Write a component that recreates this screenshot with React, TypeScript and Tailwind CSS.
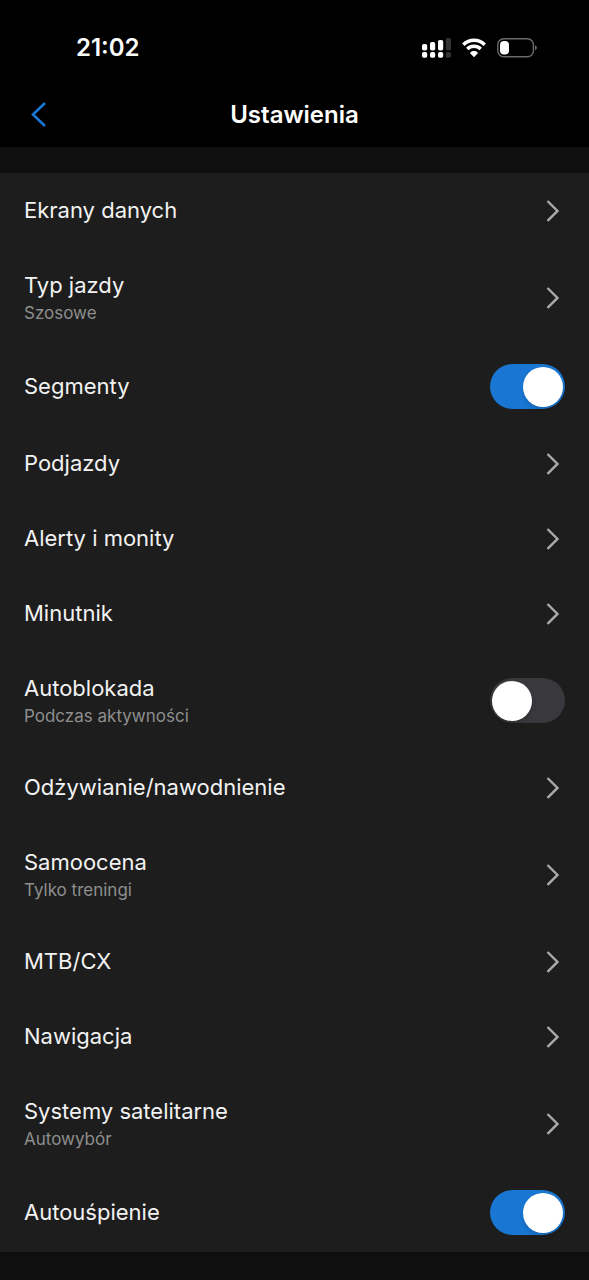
import React, { useState } from "react";

interface Setting {
  id: string;
  title: string;
  subtitle?: string;
  toggle?: boolean;
}

const SETTINGS: Setting[] = [
  { id: "screens", title: "Ekrany danych" },
  { id: "ride-type", title: "Typ jazdy", subtitle: "Szosowe" },
  { id: "segments", title: "Segmenty", toggle: true },
  { id: "climbs", title: "Podjazdy" },
  { id: "alerts", title: "Alerty i monity" },
  { id: "timer", title: "Minutnik" },
  {
    id: "auto-lock",
    title: "Autoblokada",
    subtitle: "Podczas aktywności",
    toggle: false,
  },
  { id: "nutrition", title: "Odżywianie/nawodnienie" },
  { id: "self-eval", title: "Samoocena", subtitle: "Tylko treningi" },
  { id: "mtb", title: "MTB/CX" },
  { id: "navigation", title: "Nawigacja" },
  { id: "satellites", title: "Systemy satelitarne", subtitle: "Autowybór" },
  { id: "auto-sleep", title: "Autouśpienie", toggle: true },
];

const SignalIcon: React.FC = () => (
  <svg width="30" height="22" viewBox="0 0 30 22" fill="#fff" aria-hidden="true">
    <rect x="1" y="7" width="5.2" height="6.5" rx="1.8" />
    <rect x="9" y="5" width="5.2" height="8.5" rx="1.8" />
    <rect x="17" y="3" width="5.2" height="10.5" rx="1.8" />
    <rect x="24.8" y="1" width="5.2" height="12.5" rx="1.8" fill="#333" />
    <rect x="1" y="15" width="5.2" height="5.8" rx="1.8" />
    <rect x="9" y="15" width="5.2" height="5.8" rx="1.8" />
    <rect x="17" y="15" width="5.2" height="5.8" rx="1.8" />
    <rect x="24.8" y="15" width="5.2" height="5.8" rx="1.8" fill="#333" />
  </svg>
);

const WifiIcon: React.FC = () => (
  <svg width="24" height="20" viewBox="0 0 24 20" fill="none" aria-hidden="true">
    <path
      d="M1.300 6.700a15.200 15.200 0 0 1 21.400 0M5.300 11.100a9.500 9.500 0 0 1 13.400 0"
      stroke="#fff"
      strokeWidth="3.500"
    />
    <path
      d="M12 19.200 8.400 15.500a.8.8 0 0 1 0-1.100c2-1.900 5.200-1.900 7.200 0a.8.8 0 0 1 0 1.100Z"
      fill="#fff"
    />
  </svg>
);

const BatteryIcon: React.FC = () => (
  <svg width="41" height="20" viewBox="0 0 41 20" fill="none" aria-hidden="true">
    <rect x="0.8" y="0.8" width="35.600" height="18" rx="6" stroke="#6b6b6b" strokeWidth="1.400" />
    <path d="M38 7.300c2.400.7 2.400 4.300 0 5Z" fill="#6b6b6b" />
    <rect x="3" y="3" width="9" height="13.600" rx="4" fill="#fff" />
  </svg>
);

const ChevronRight: React.FC = () => (
  <svg width="24" height="24" viewBox="0 0 24 24" fill="none" aria-hidden="true">
    <path d="m6.500 2 10 9.900-10 9.900" stroke="#a9a9a9" strokeWidth="2.400" />
  </svg>
);

const SettingText: React.FC<{ setting: Setting }> = ({ setting }) => (
  <span className="flex flex-col gap-1 text-left">
    <span className="text-[22px] leading-[27px] text-[#f2f2f2]">
      {setting.title}
    </span>
    {setting.subtitle && (
      <span className="text-[17px] leading-5 text-[#8e8e8e]">
        {setting.subtitle}
      </span>
    )}
  </span>
);

const ToggleRow: React.FC<{ setting: Setting }> = ({ setting }) => {
  const [checked, setChecked] = useState(Boolean(setting.toggle));

  return (
    <label
      htmlFor={setting.id}
      className={`flex items-center justify-between px-6 ${
        setting.subtitle ? "py-6" : "py-[17px]"
      }`}
    >
      <SettingText setting={setting} />
      <input
        id={setting.id}
        type="checkbox"
        role="switch"
        checked={checked}
        onChange={(e) => setChecked(e.target.checked)}
        className="flex h-[45px] w-[75px] shrink-0 appearance-none items-center rounded-full bg-[#39383d] px-[2px] before:block before:size-10 before:rounded-full before:bg-white before:shadow-md checked:bg-[#1976d2] checked:before:ml-auto"
      />
    </label>
  );
};

const LinkRow: React.FC<{ setting: Setting }> = ({ setting }) => (
  <button
    type="button"
    className="flex w-full items-center justify-between px-6 py-6"
  >
    <SettingText setting={setting} />
    <ChevronRight />
  </button>
);

const App: React.FC = () => {
  return (
    <div className="min-h-screen bg-[#0f0f0f] font-['Inter',sans-serif]">
      <header className="bg-black text-white">
        <div className="flex items-center justify-between pt-8 pr-[51px] pl-[76px]">
          <span className="text-2xl leading-8 font-semibold">21:02</span>
          <div className="flex items-center gap-[11px]">
            <SignalIcon />
            <WifiIcon />
            <BatteryIcon />
          </div>
        </div>
        <div className="grid grid-cols-[48px_1fr_48px] items-center px-4 pt-[27px] pb-2">
          <button
            type="button"
            aria-label="Wstecz"
            className="flex h-12 items-center justify-center"
          >
            <svg width="28" height="28" viewBox="0 0 28 28" fill="none">
              <path
                d="M19 2 7 13.500 19 25"
                stroke="#1976d2"
                strokeWidth="2.600"
              />
            </svg>
          </button>
          <h1 className="text-center text-2xl font-semibold">Ustawienia</h1>
        </div>
      </header>
      <main className="mt-[26px] bg-[#1d1d1d]">
        <ul>
          {SETTINGS.map((setting) => (
            <li key={setting.id}>
              {setting.toggle === undefined ? (
                <LinkRow setting={setting} />
              ) : (
                <ToggleRow setting={setting} />
              )}
            </li>
          ))}
        </ul>
      </main>
    </div>
  );
};

export default App;
